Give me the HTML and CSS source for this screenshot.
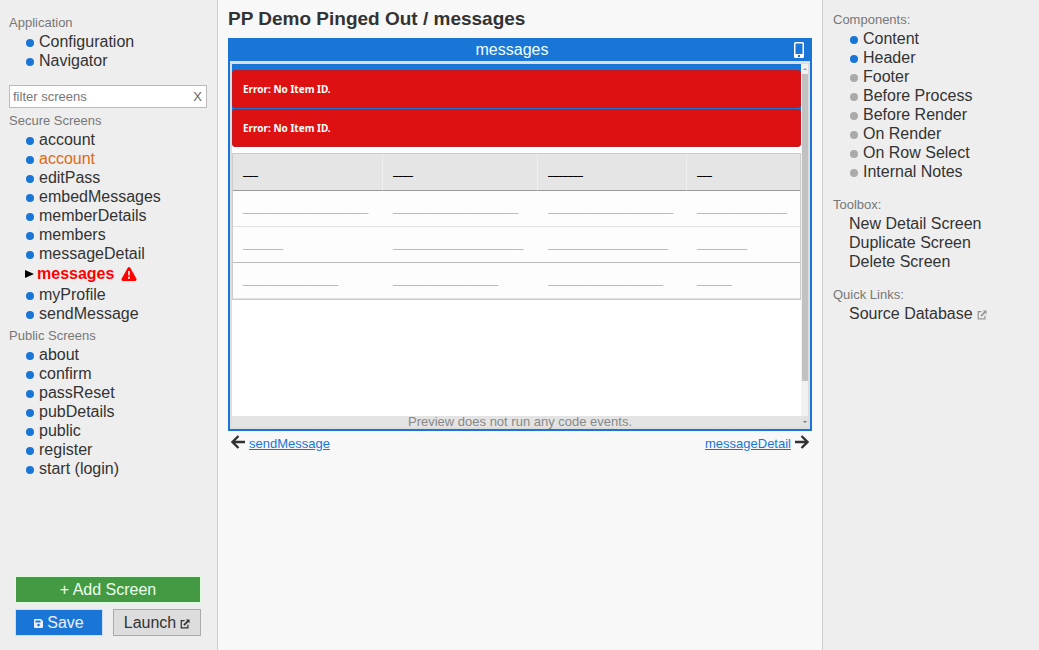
FILE: index.html
```html
<!DOCTYPE html>
<html lang="en">
<head>
<meta charset="utf-8">
<title>PP Demo Pinged Out / messages</title>
<link rel="stylesheet" href="styles.css">
</head>
<body>
<svg class="defs" aria-hidden="true">
  <symbol id="launch" viewBox="0 0 12 12"><path d="M5.500 2H1.500V10.500H9.500V7" fill="none" stroke="currentColor" stroke-width="1.500"/><path d="M7 0.500H11.500V5L10 3.500L5.500 8L4 6.500L8.500 2Z" fill="currentColor"/></symbol>
</svg>
<div class="app">
  <nav class="side left" aria-label="Screens">
    <section class="group">
      <h2 class="label">Application</h2>
      <ul class="list">
        <li><a class="item" href="#"><i class="dot"></i>Configuration</a></li>
        <li><a class="item" href="#"><i class="dot"></i>Navigator</a></li>
      </ul>
    </section>
    <div class="filter">
      <input class="filter-input" type="text" placeholder="filter screens" aria-label="filter screens">
      <button class="filter-clear" type="button">X</button>
    </div>
    <section class="group secure">
      <h2 class="label">Secure Screens</h2>
      <ul class="list">
        <li><a class="item" href="#"><i class="dot"></i>account</a></li>
        <li><a class="item warm" href="#"><i class="dot"></i>account</a></li>
        <li><a class="item" href="#"><i class="dot"></i>editPass</a></li>
        <li><a class="item" href="#"><i class="dot"></i>embedMessages</a></li>
        <li><a class="item" href="#"><i class="dot"></i>memberDetails</a></li>
        <li><a class="item" href="#"><i class="dot"></i>members</a></li>
        <li><a class="item" href="#"><i class="dot"></i>messageDetail</a></li>
        <li><a class="item current" href="#"><svg class="pointer" viewBox="0 0 9 8"><path d="M0 0L9 4L0 8Z"/></svg>messages<svg class="alert" viewBox="0 0 16 14"><path d="M6.800 0.700Q8 -0.700 9.200 0.700L15.300 11.500Q16 13.500 14.200 14H1.800Q0 13.500 0.700 11.500Z" fill="#f00"/><path d="M7 4H9L8.700 8.500H7.300Z M7 9.700H9V11.700H7Z" fill="#eee"/></svg></a></li>
        <li><a class="item" href="#"><i class="dot"></i>myProfile</a></li>
        <li><a class="item" href="#"><i class="dot"></i>sendMessage</a></li>
      </ul>
    </section>
    <section class="group public">
      <h2 class="label">Public Screens</h2>
      <ul class="list">
        <li><a class="item" href="#"><i class="dot"></i>about</a></li>
        <li><a class="item" href="#"><i class="dot"></i>confirm</a></li>
        <li><a class="item" href="#"><i class="dot"></i>passReset</a></li>
        <li><a class="item" href="#"><i class="dot"></i>pubDetails</a></li>
        <li><a class="item" href="#"><i class="dot"></i>public</a></li>
        <li><a class="item" href="#"><i class="dot"></i>register</a></li>
        <li><a class="item" href="#"><i class="dot"></i>start (login)</a></li>
      </ul>
    </section>
    <div class="actions">
      <button class="btn add" type="button">+ Add Screen</button>
      <button class="btn save" type="button"><svg class="disk" viewBox="0 0 9 9"><path fill-rule="evenodd" d="M1 0H7L9 2V8Q9 9 8 9H1Q0 9 0 8V1Q0 0 1 0ZM1.500 1.500V3.500H6.500V1.500ZM4.500 4.800A1.300 1.300 0 1 0 4.500 7.400A1.300 1.300 0 1 0 4.500 4.800Z" fill="currentColor"/></svg>Save</button>
      <button class="btn launch" type="button">Launch<svg class="ext"><use href="#launch"/></svg></button>
    </div>
  </nav>

  <main class="main">
    <h1 class="title">PP Demo Pinged Out / messages</h1>
    <section class="frame">
      <header class="frame-head">
        <span>messages</span>
        <button class="phone" type="button" aria-label="Mobile preview"><svg class="phone-icon" viewBox="0 0 10 16"><path fill-rule="evenodd" d="M1.500 0H8.500Q10 0 10 1.500V14.500Q10 16 8.500 16H1.500Q0 16 0 14.500V1.500Q0 0 1.500 0ZM1.500 1.500V12H8.500V1.500ZM4 13V15H6V13Z" fill="#fff"/></svg></button>
      </header>
      <div class="preview">
        <div class="page">
          <div class="alerts">
            <p class="error">Error: No Item ID.</p>
            <p class="error">Error: No Item ID.</p>
          </div>
          <table class="grid">
            <thead>
              <tr><th class="c1">___</th><th class="c2">____</th><th class="c3">_______</th><th>___</th></tr>
            </thead>
            <tbody>
              <tr><td>_________________________</td><td>_________________________</td><td>_________________________</td><td>__________________</td></tr>
              <tr class="strong"><td>________</td><td>__________________________</td><td>________________________</td><td>__________</td></tr>
              <tr><td>___________________</td><td>_____________________</td><td>_______________________</td><td>_______</td></tr>
            </tbody>
          </table>
        </div>
        <div class="scroll">
          <svg class="tick" viewBox="0 0 6 10"><path d="M1 6L3 4L5 6Z" fill="#999"/></svg>
          <div class="thumb"></div>
          <svg class="tick" viewBox="0 0 6 10"><path d="M1 4L3 6L5 4Z" fill="#777"/></svg>
        </div>
        <div class="note">Preview does not run any code events.</div>
      </div>
    </section>
    <nav class="pager" aria-label="Adjacent screens">
      <a class="page-link" href="#"><svg class="arrow" viewBox="0 0 14 14"><path d="M7.500 1L1.500 7L7.500 13M2 7H14" fill="none" stroke="#333" stroke-width="2.400"/></svg><span class="link-text">sendMessage</span></a>
      <a class="page-link" href="#"><span class="link-text">messageDetail</span><svg class="arrow" viewBox="0 0 14 14"><path d="M6.500 1L12.500 7L6.500 13M12 7H0" fill="none" stroke="#333" stroke-width="2.400"/></svg></a>
    </nav>
  </main>

  <aside class="side right">
    <section class="group">
      <h2 class="label">Components:</h2>
      <ul class="list">
        <li><a class="item" href="#"><i class="dot"></i>Content</a></li>
        <li><a class="item" href="#"><i class="dot"></i>Header</a></li>
        <li><a class="item" href="#"><i class="dot off"></i>Footer</a></li>
        <li><a class="item" href="#"><i class="dot off"></i>Before Process</a></li>
        <li><a class="item" href="#"><i class="dot off"></i>Before Render</a></li>
        <li><a class="item" href="#"><i class="dot off"></i>On Render</a></li>
        <li><a class="item" href="#"><i class="dot off"></i>On Row Select</a></li>
        <li><a class="item" href="#"><i class="dot off"></i>Internal Notes</a></li>
      </ul>
    </section>
    <section class="group">
      <h2 class="label">Toolbox:</h2>
      <ul class="list plain">
        <li><a class="item" href="#">New Detail Screen</a></li>
        <li><a class="item" href="#">Duplicate Screen</a></li>
        <li><a class="item" href="#">Delete Screen</a></li>
      </ul>
    </section>
    <section class="group">
      <h2 class="label">Quick Links:</h2>
      <ul class="list plain">
        <li><a class="item" href="#">Source Database<svg class="ext faint"><use href="#launch"/></svg></a></li>
      </ul>
    </section>
  </aside>
</div>
</body>
</html>
```

FILE: styles.css
```css
* { box-sizing: border-box; }
body {
  margin: 0;
  background: #f8f8f8;
  color: #333;
  font-family: "Liberation Sans", Arial, sans-serif;
  font-size: 16px;
  line-height: 19px;
}
button, input { font-family: inherit; }
.defs { display: none; }
.app {
  display: grid;
  grid-template-columns: 218px 1fr 217px;
  min-height: 100vh;
}

.side {
  display: flex;
  flex-direction: column;
  background: #eee;
}
.left { border-right: 1px solid #ccc; padding: 15px 10px 14px 9px; }
.right { border-left: 1px solid #ccc; padding: 12px 10px; gap: 16px; }
.label {
  margin: 0 0 2px;
  color: #777;
  font-size: 13px;
  font-weight: normal;
  line-height: 15px;
}
.list { list-style: none; margin: 0; padding: 0 0 0 17px; }
.list.plain { padding-left: 16px; }
.item {
  display: flex;
  align-items: center;
  color: #333;
  text-decoration: none;
}
.dot {
  width: 8px;
  height: 8px;
  margin: 2px 5px 0 0;
  border-radius: 50%;
  background: #1976d6;
}
.dot.off { background: #aaa; }
.warm { color: #e06a10; }
.current { color: #f00; font-weight: bold; line-height: 22px; }
.pointer { width: 9px; height: 8px; margin: 0 3px 0 -1px; fill: #000; }
.alert { width: 16px; height: 14px; margin-left: 7px; }
.public { margin-top: 5px; }

.filter {
  display: flex;
  align-items: center;
  height: 23px;
  margin: 15px 0 5px;
  border: 1px solid #bbb;
  background: #fff;
}
.filter-input {
  flex: 1;
  min-width: 0;
  padding: 0 3px;
  border: 0;
  background: none;
  font-size: 13px;
}
.filter-input::placeholder { color: #777; }
.filter-clear {
  padding: 0 4px;
  border: 0;
  background: none;
  color: #666;
  font-size: 13px;
}

.actions {
  display: grid;
  grid-template-columns: 1fr 1fr;
  gap: 6px 10px;
  margin-top: auto;
  padding: 20px 6px 0;
}
.btn {
  display: flex;
  align-items: center;
  justify-content: center;
  gap: 4px;
  height: 27px;
  padding: 0;
  border: 1px solid;
  font-size: 16px;
}
.add { grid-column: 1 / -1; background: #439a43; border-color: #dfd; color: #efe; }
.save { background: #1976d6; border-color: #cdf; color: #eef; }
.launch { background: #ddd; border-color: #aaa; color: #333; }
.disk { width: 9px; height: 9px; margin-top: 2px; }
.ext { width: 10px; height: 10px; margin-top: 2px; }
.ext.faint { margin-left: 4px; color: #999; }

.main { min-width: 0; padding: 0 10px; }
.title { margin: 0; font-size: 19px; line-height: 38px; }
.frame { border: 2px solid #1976d6; border-top: 0; }
.frame-head {
  position: relative;
  padding-right: 16px;
  background: #1976d6;
  color: #eff;
  line-height: 23px;
  text-align: center;
}
.phone {
  position: absolute;
  top: 4px;
  right: 6px;
  padding: 0;
  border: 0;
  background: none;
}
.phone-icon { display: block; width: 10px; height: 16px; }
.preview {
  position: relative;
  display: flex;
  aspect-ratio: 580 / 368;
  border: 2px solid #ddd;
  border-top-width: 3px;
  background: #fff;
}
.page { flex: 1; min-width: 0; }
.alerts {
  display: grid;
  gap: 1px;
  margin-bottom: 6px;
  padding-top: 6px;
  background: linear-gradient(#1976d6 60px, #fff 60px);
}
.error {
  margin: 0;
  padding: 10px;
  border: 1px solid #c11a22;
  border-radius: 3px;
  background: #d11;
  color: #fff;
  font: bold 10px/16px "Noto Sans", sans-serif;
}
.grid {
  width: 100%;
  table-layout: fixed;
  border: 1px solid #ccc;
  border-spacing: 0;
  font-size: 9px;
  line-height: 12px;
}
.grid th, .grid td { overflow: hidden; padding: 12px 10px 11px; text-align: left; }
.grid th {
  height: 37px;
  padding: 12px 10px 14px;
  border-right: 1px solid #eee;
  border-bottom: 1px solid #999;
  background: #e5e5e5;
  color: #000;
  font: bold 10px/10px "DejaVu Sans", sans-serif;
}
.grid th:last-child { border-right: 0; }
.grid td { border-bottom: 1px solid #e2e2e2; background: #fdfdfd; color: #999; }
.grid .strong td { border-bottom-color: #bbb; }
.c1 { width: 150px; }
.c2 { width: 155px; }
.c3 { width: 149px; }
.scroll {
  display: flex;
  flex-direction: column;
  width: 7px;
  padding-left: 1px;
  background: #f1f1f1;
}
.tick { position: relative; z-index: 1; width: 6px; height: 10px; }
.thumb { flex: 0 0 auto; height: 307px; margin-bottom: auto; background: #c1c1c1; }
.note {
  position: absolute;
  right: -2px;
  bottom: -2px;
  left: -2px;
  padding-bottom: 2px;
  background: rgba(221, 221, 221, 0.8);
  color: #888;
  font-size: 13px;
  line-height: 11px;
  text-align: center;
}
.pager { display: flex; justify-content: space-between; padding: 4px 3px 0; }
.page-link { display: flex; gap: 4px; color: #1976d6; font-size: 13px; line-height: 17px; }
.arrow { width: 14px; height: 14px; }
```
